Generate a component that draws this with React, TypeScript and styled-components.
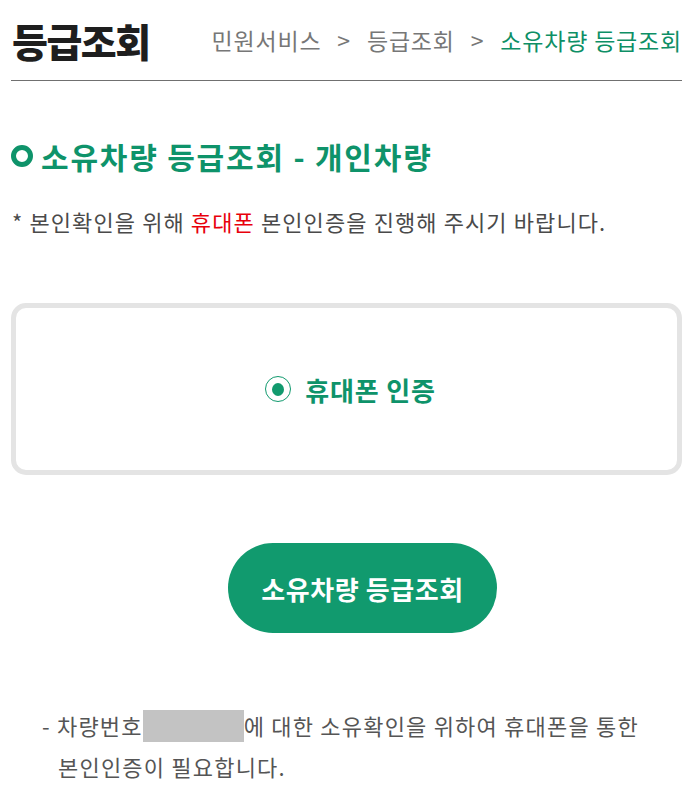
import styled, { createGlobalStyle } from 'styled-components';

const GlobalStyle = createGlobalStyle`
  body {
    margin: 0;
    background: #fff;
    font-family: "Noto Sans CJK KR", "Noto Sans", sans-serif;
    word-break: keep-all;
  }
`;

const Page = styled.div`
  padding: 0 14px 0 11px;
`;

const Header = styled.header`
  display: flex;
  align-items: center;
  justify-content: space-between;
  height: 80px;
  border-bottom: 1px solid #707070;
`;

const PageTitle = styled.h1`
  margin: 0 0 0 1px;
  font-size: 39px;
  font-weight: 900;
  color: #1e1e1e;
  letter-spacing: -1.5px;
`;

const Crumbs = styled.nav`
  display: flex;
  align-items: center;
  gap: 16px;
  font-size: 23px;
  color: #777;
  letter-spacing: 0.8px;
`;

const Crumb = styled.span<{ current?: boolean }>`
  color: ${(p) => (p.current ? '#0e8f66' : '#777')};
`;

const SectionTitle = styled.h2`
  display: flex;
  align-items: center;
  gap: 8px;
  margin: 53px 0 0;
  font-size: 30px;
  font-weight: 700;
  color: #0e936a;
  letter-spacing: 1.8px;
  line-height: 44px;
`;

const Ring = styled.span`
  width: 12px;
  height: 12px;
  border: 5px solid #0e936a;
  border-radius: 50%;
  flex: none;
`;

const Notice = styled.p`
  margin: 28px 0 0 1px;
  font-size: 22px;
  color: #4a4a4a;
  letter-spacing: 1.1px;
  line-height: 30px;
`;

const Red = styled.span`
  color: #e8000b;
`;

const ChoiceBox = styled.div`
  margin-top: 67px;
  height: 162px;
  border: 5px solid #e4e4e4;
  border-radius: 15px;
  display: flex;
  align-items: center;
  justify-content: center;
  gap: 14px;
  padding-left: 8px;
`;

const Radio = styled.span`
  width: 24px;
  height: 24px;
  border: 1px solid #119a6e;
  border-radius: 50%;
  display: flex;
  align-items: center;
  justify-content: center;
  &::after {
    content: '';
    width: 12px;
    height: 13px;
    border-radius: 50%;
    background: #119a6e;
  }
`;

const ChoiceLabel = styled.span`
  font-size: 26px;
  font-weight: 700;
  color: #0e936a;
  letter-spacing: 0.8px;
`;

const ButtonRow = styled.div`
  display: flex;
  justify-content: center;
  margin-top: 68px;
  padding-left: 32px;
`;

const SubmitButton = styled.button`
  width: 269px;
  height: 90px;
  border: none;
  border-radius: 45px;
  background: #119a6e;
  color: #fff;
  font-family: inherit;
  font-size: 26px;
  font-weight: 700;
  letter-spacing: 0.6px;
`;

const Footnote = styled.p`
  margin: 72px 0 0 31px;
  padding-left: 16px;
  text-indent: -16px;
  font-size: 22px;
  line-height: 41px;
  color: #555;
  letter-spacing: 1.2px;
  width: 610px;
`;

const Masked = styled.span`
  display: inline-block;
  width: 101px;
  height: 32px;
  vertical-align: -7px;
  background: #c3c3c3;
  text-indent: 0;
`;

export default function App() {
  return (
    <>
      <GlobalStyle />
      <Page>
        <Header>
          <PageTitle>등급조회</PageTitle>
          <Crumbs>
            <Crumb>민원서비스</Crumb>
            <Crumb>&gt;</Crumb>
            <Crumb>등급조회</Crumb>
            <Crumb>&gt;</Crumb>
            <Crumb current>소유차량 등급조회</Crumb>
          </Crumbs>
        </Header>

        <SectionTitle>
          <Ring />
          소유차량 등급조회 - 개인차량
        </SectionTitle>

        <Notice>
          * 본인확인을 위해 <Red>휴대폰</Red> 본인인증을 진행해 주시기 바랍니다.
        </Notice>

        <ChoiceBox>
          <Radio />
          <ChoiceLabel>휴대폰 인증</ChoiceLabel>
        </ChoiceBox>

        <ButtonRow>
          <SubmitButton>소유차량 등급조회</SubmitButton>
        </ButtonRow>

        <Footnote>
          - 차량번호<Masked />에 대한 소유확인을 위하여 휴대폰을 통한 본인인증이 필요합니다.
        </Footnote>
      </Page>
    </>
  );
}
